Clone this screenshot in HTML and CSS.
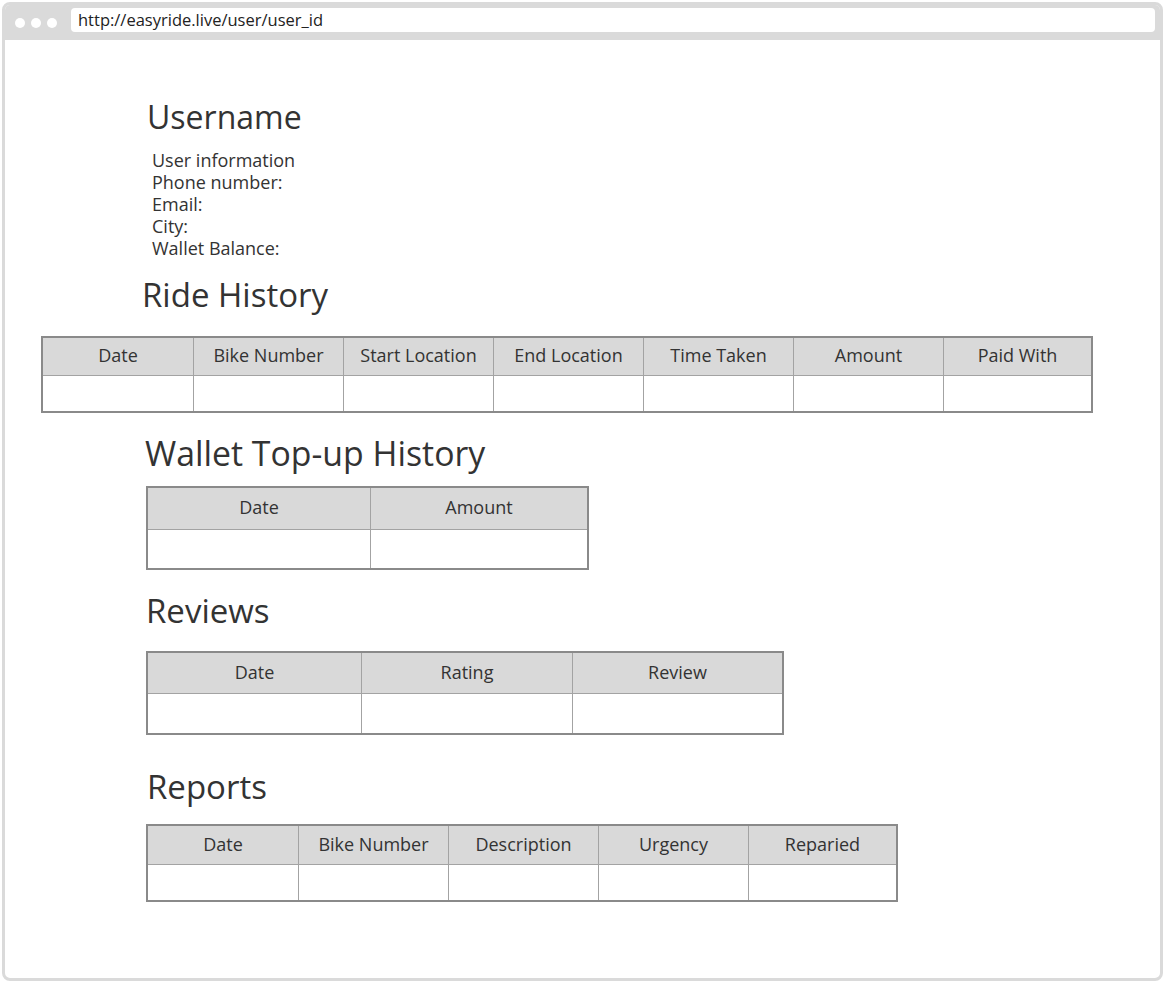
FILE: index.html
```html
<!DOCTYPE html>
<html lang="en">
<head>
<meta charset="utf-8">
<title>User profile</title>
<link rel="stylesheet" href="styles.css">
</head>
<body>
<div class="browser">
  <div class="toolbar">
    <div class="dots"><span class="dot"></span><span class="dot"></span><span class="dot"></span></div>
    <div class="url">http://easyride.live/user/user_id</div>
  </div>
  <main class="content">
    <h1 class="username">Username</h1>
    <div class="info">
      <div>User information</div>
      <div>Phone number:</div>
      <div>Email:</div>
      <div>City:</div>
      <div>Wallet Balance:</div>
    </div>

    <h2 class="heading ride-heading">Ride History</h2>
    <div class="tbl tbl-ride">
      <div class="th">Date</div><div class="th">Bike Number</div><div class="th">Start Location</div><div class="th">End Location</div><div class="th">Time Taken</div><div class="th">Amount</div><div class="th">Paid With</div>
      <div class="td"></div><div class="td"></div><div class="td"></div><div class="td"></div><div class="td"></div><div class="td"></div><div class="td"></div>
    </div>

    <h2 class="heading wallet-heading">Wallet Top-up History</h2>
    <div class="tbl tbl-wallet">
      <div class="th">Date</div><div class="th">Amount</div>
      <div class="td"></div><div class="td"></div>
    </div>

    <h2 class="heading reviews-heading">Reviews</h2>
    <div class="tbl tbl-reviews">
      <div class="th">Date</div><div class="th">Rating</div><div class="th">Review</div>
      <div class="td"></div><div class="td"></div><div class="td"></div>
    </div>

    <h2 class="heading reports-heading">Reports</h2>
    <div class="tbl tbl-reports">
      <div class="th">Date</div><div class="th">Bike Number</div><div class="th">Description</div><div class="th">Urgency</div><div class="th">Reparied</div>
      <div class="td"></div><div class="td"></div><div class="td"></div><div class="td"></div><div class="td"></div>
    </div>
  </main>
</div>
</body>
</html>
```

FILE: styles.css
```css
* { box-sizing: border-box; }
html, body { margin: 0; padding: 0; background: #ffffff; }
body {
  font-family: "Open Sans", "Noto Sans", sans-serif;
  color: #333333;
  width: 1164px;
  height: 984px;
  overflow: hidden;
}
.browser {
  margin: 2px 0 0 2px;
  width: 1161px;
  height: 979px;
  border: 3px solid #dadada;
  border-radius: 8px;
  background: #ffffff;
  overflow: hidden;
}
.toolbar {
  height: 35px;
  background: #dadada;
  display: flex;
  align-items: flex-start;
  padding: 3px 5px 0 10px;
}
.dots {
  display: flex;
  gap: 6px;
  margin-top: 10px;
  width: 56px;
}
.dot {
  width: 10px;
  height: 10px;
  border-radius: 50%;
  background: #ffffff;
}
.url {
  flex: 1;
  height: 24px;
  background: #ffffff;
  border-radius: 4px;
  font-size: 16.5px;
  line-height: 24px;
  padding-left: 7px;
  color: #222222;
}
.content {
  padding: 58px 0 0 0;
}
.username {
  margin: 0 0 0 142px;
  font-size: 32px;
  font-weight: 400;
  line-height: 38px;
  height: 38px;
}
.info {
  margin: 13px 0 0 147px;
  font-size: 18px;
  line-height: 22px;
}
.heading {
  font-size: 33px;
  font-weight: 400;
  line-height: 38px;
  height: 38px;
  margin: 0;
}
.ride-heading { margin: 17px 0 0 137px; }
.wallet-heading { margin: 21px 0 0 140px; font-size: 33.8px; }
.reviews-heading { margin: 22px 0 0 141px; }
.reports-heading { margin: 33px 0 0 142px; }

.tbl {
  display: grid;
  border: 2px solid #8a8a8a;
  width: max-content;
}
.th, .td { border-left: 1px solid #a3a3a3; }
.th {
  background: #d9d9d9;
  border-bottom: 1px solid #a3a3a3;
  font-size: 18px;
  text-align: center;
  display: flex;
  align-items: center;
  justify-content: center;
  padding-bottom: 3px;
}
.tbl-ride .th:nth-child(7n+1), .tbl-ride .td:nth-child(7n+1),
.tbl-wallet .th:nth-child(2n+1), .tbl-wallet .td:nth-child(2n+1),
.tbl-reviews .th:nth-child(3n+1), .tbl-reviews .td:nth-child(3n+1),
.tbl-reports .th:nth-child(5n+1), .tbl-reports .td:nth-child(5n+1) { border-left: none; }

.tbl-ride {
  margin: 22px 0 0 36px;
  grid-template-columns: 150px 150px 150px 150px 150px 150px 148px;
  grid-template-rows: 38px 35px;
}
.tbl-wallet {
  margin: 14px 0 0 141px;
  grid-template-columns: 222px 217px;
  grid-template-rows: 42px 38px;
}
.tbl-reviews {
  margin: 21px 0 0 141px;
  grid-template-columns: 213px 211px 210px;
  grid-template-rows: 41px 39px;
}
.tbl-reports {
  margin: 18px 0 0 141px;
  grid-template-columns: 150px 150px 150px 150px 148px;
  grid-template-rows: 39px 35px;
}
```
